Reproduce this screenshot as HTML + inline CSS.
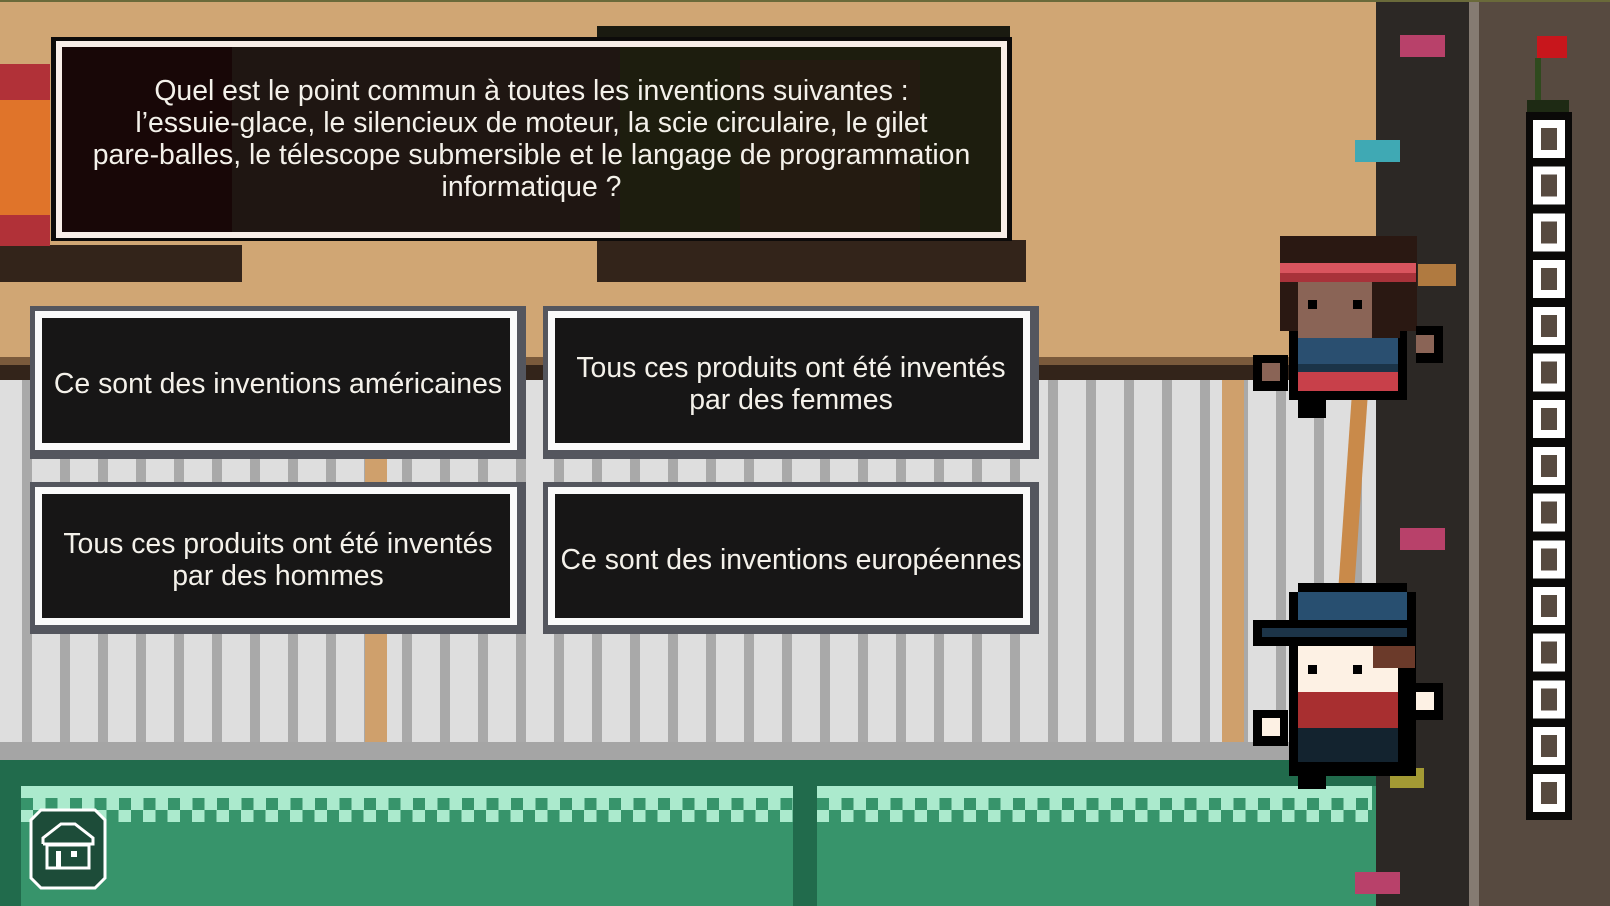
<!DOCTYPE html>
<html><head><meta charset="utf-8"><style>
*{margin:0;padding:0;box-sizing:border-box}
body{width:1610px;height:906px;overflow:hidden;position:relative;background:#d0a674;font-family:"Liberation Sans",sans-serif}
.a{position:absolute}
.t{color:#f4f1ea;font-size:28.4px;text-align:center;line-height:32px;position:absolute;display:flex;align-items:center;justify-content:center;white-space:nowrap}
.box{position:absolute;background:#54565e}
.box .w{position:absolute;left:5px;top:5px;right:9px;bottom:9px;background:#fafafa}
.box .d{position:absolute;left:12px;top:12px;right:16px;bottom:16px;background:#171616}
</style></head><body>
<div class="a" style="left:0;top:357px;width:1376px;height:8px;background:#7a5a3c"></div>
<div class="a" style="left:0;top:365px;width:1376px;height:15px;background:#33241a"></div>
<div class="a" style="left:0;top:380px;width:1376px;height:362px;background:#dedede;
background-image:repeating-linear-gradient(90deg,#dedede 0 22px,#a9a9a9 22px 32px,#dedede 32px 38px)"></div>
<div class="a" style="left:365px;top:380px;width:22px;height:380px;background:#cfa06c"></div>
<div class="a" style="left:1222px;top:380px;width:22px;height:380px;background:#cfa06c"></div>
<div class="a" style="left:0;top:742px;width:1376px;height:18px;background:#a5a5a5"></div>
<div class="a" style="left:0;top:760px;width:1376px;height:146px;background:#216b4c"></div>
<div class="a" style="left:21px;top:786px;width:772px;height:120px;background:#37946b"></div>
<div class="a" style="left:817px;top:786px;width:559px;height:120px;background:#37946b"></div>
<div class="a" style="left:21px;top:786px;width:772px;height:36px;background:#abeacd"></div>
<div class="a" style="left:817px;top:786px;width:555px;height:36px;background:#abeacd"></div>
<div class="a" style="left:21px;top:798px;width:772px;height:12px;background-image:repeating-linear-gradient(90deg,#37946b 0 12px,transparent 12px 24.5px)"></div>
<div class="a" style="left:33px;top:810px;width:760px;height:12px;background-image:repeating-linear-gradient(90deg,#37946b 0 12px,transparent 12px 24.5px)"></div>
<div class="a" style="left:817px;top:798px;width:555px;height:12px;background-image:repeating-linear-gradient(90deg,#37946b 0 12px,transparent 12px 24.5px)"></div>
<div class="a" style="left:829px;top:810px;width:543px;height:12px;background-image:repeating-linear-gradient(90deg,#37946b 0 12px,transparent 12px 24.5px)"></div>
<div class="a" style="left:1376px;top:0;width:93px;height:906px;background:#2c2825"></div>
<div class="a" style="left:1469px;top:0;width:10px;height:906px;background:#857b72"></div>
<div class="a" style="left:1479px;top:0;width:131px;height:906px;background:#574a40"></div>
<div class="a" style="left:0;top:0;width:1610px;height:2px;background:#6a6a3a"></div>
<div class="a" style="left:1400px;top:35px;width:45px;height:22px;background:#b8416a"></div>
<div class="a" style="left:1355px;top:140px;width:45px;height:22px;background:#3fa9b4"></div>
<div class="a" style="left:1418px;top:264px;width:38px;height:22px;background:#b07a40"></div>
<div class="a" style="left:1400px;top:528px;width:45px;height:22px;background:#b8416a"></div>
<div class="a" style="left:1355px;top:872px;width:45px;height:22px;background:#b8416a"></div>
<div class="a" style="left:1390px;top:768px;width:34px;height:20px;background:#a39a34"></div>
<div class="a" style="left:1526px;top:112px;width:46px;height:708px;background:#0a0908"></div>
<div class="a" style="left:1533px;top:120px;width:32px;height:696px;background-image:repeating-linear-gradient(180deg,#fff 0 38px,transparent 38px 46.7px)"></div>
<div class="a" style="left:1541px;top:128px;width:16px;height:680px;background-image:repeating-linear-gradient(180deg,#574a40 0 22px,transparent 22px 46.7px)"></div>
<div class="a" style="left:1537px;top:36px;width:30px;height:22px;background:#c8161c"></div>
<div class="a" style="left:1535px;top:58px;width:6px;height:50px;background:#2f4a1e"></div>
<div class="a" style="left:1527px;top:100px;width:42px;height:12px;background:#1e2a14"></div>
<div class="a" style="left:0;top:245px;width:242px;height:37px;background:#33241a"></div>
<div class="a" style="left:597px;top:240px;width:429px;height:42px;background:#33241a"></div>
<div class="a" style="left:0;top:64px;width:50px;height:182px;background:#b13138"></div>
<div class="a" style="left:0;top:100px;width:50px;height:115px;background:#e0742a"></div>
<div class="a" style="left:597px;top:26px;width:413px;height:20px;background:#1a1a10"></div>
<div class="a" style="left:51px;top:37px;width:961px;height:204px;background:#0d0b0a"></div>
<div class="a" style="left:56px;top:41px;width:951px;height:197px;background:#f8eee8"></div>
<div class="a" style="left:62px;top:47px;width:939px;height:185px;background:#1f1612"></div>
<div class="a" style="left:62px;top:47px;width:170px;height:185px;background:#180707"></div>
<div class="a" style="left:620px;top:47px;width:381px;height:185px;background:#1d1d0e"></div>
<div class="a" style="left:740px;top:60px;width:180px;height:170px;background:#2a1a14;opacity:.6"></div>
<div class="t" style="left:62px;top:59px;width:939px;height:160px">Quel est le point commun à toutes les inventions suivantes :<br>l’essuie-glace, le silencieux de moteur, la scie circulaire, le gilet<br>pare-balles, le télescope submersible et le langage de programmation<br>informatique ?</div>
<div class="box" style="left:30px;top:306px;width:496px;height:153px"><div class="w"></div><div class="d"></div></div>
<div class="t" style="left:30px;top:310px;width:496px;height:148px">Ce sont des inventions américaines</div>
<div class="box" style="left:543px;top:306px;width:496px;height:153px"><div class="w"></div><div class="d"></div></div>
<div class="t" style="left:543px;top:310px;width:496px;height:148px">Tous ces produits ont été inventés<br>par des femmes</div>
<div class="box" style="left:30px;top:482px;width:496px;height:152px"><div class="w"></div><div class="d"></div></div>
<div class="t" style="left:30px;top:486px;width:496px;height:148px">Tous ces produits ont été inventés<br>par des hommes</div>
<div class="box" style="left:543px;top:482px;width:496px;height:152px"><div class="w"></div><div class="d"></div></div>
<div class="t" style="left:543px;top:486px;width:496px;height:148px">Ce sont des inventions européennes</div>
<div class="a" style="left:1345px;top:395px;width:16px;height:195px;background:#c98a4a;transform:skewX(-4deg)"></div>
<div class="a" style="left:1289px;top:330px;width:118px;height:70px;background:#000"></div>
<div class="a" style="left:1280px;top:236px;width:137px;height:95px;background:#2a1812"></div>
<div class="a" style="left:1280px;top:263px;width:136px;height:10px;background:#d9545e"></div>
<div class="a" style="left:1280px;top:273px;width:136px;height:9px;background:#a8323a"></div>
<div class="a" style="left:1298px;top:282px;width:100px;height:56px;background:#8a6456"></div>
<div class="a" style="left:1372px;top:282px;width:28px;height:56px;background:#2a1812"></div>
<div class="a" style="left:1308px;top:300px;width:9px;height:9px;background:#000"></div>
<div class="a" style="left:1353px;top:300px;width:9px;height:9px;background:#000"></div>
<div class="a" style="left:1298px;top:338px;width:100px;height:30px;background:#2a4f70"></div>
<div class="a" style="left:1298px;top:364px;width:100px;height:8px;background:#1b3448"></div>
<div class="a" style="left:1298px;top:372px;width:100px;height:19px;background:#c8404a"></div>
<div class="a" style="left:1253px;top:355px;width:35px;height:36px;background:#000"></div>
<div class="a" style="left:1262px;top:363px;width:18px;height:18px;background:#8a6456"></div>
<div class="a" style="left:1416px;top:326px;width:27px;height:37px;background:#000"></div>
<div class="a" style="left:1416px;top:335px;width:18px;height:18px;background:#8a6456"></div>
<div class="a" style="left:1298px;top:391px;width:28px;height:27px;background:#000"></div>
<div class="a" style="left:1298px;top:583px;width:109px;height:12px;background:#000"></div>
<div class="a" style="left:1289px;top:592px;width:127px;height:54px;background:#000"></div>
<div class="a" style="left:1298px;top:592px;width:109px;height:36px;background:#284f70"></div>
<div class="a" style="left:1253px;top:620px;width:163px;height:26px;background:#000"></div>
<div class="a" style="left:1262px;top:628px;width:145px;height:9px;background:#1c3448"></div>
<div class="a" style="left:1289px;top:646px;width:127px;height:130px;background:#000"></div>
<div class="a" style="left:1298px;top:646px;width:100px;height:46px;background:#fdf1e4"></div>
<div class="a" style="left:1373px;top:646px;width:42px;height:22px;background:#6b3a2a"></div>
<div class="a" style="left:1308px;top:665px;width:9px;height:9px;background:#000"></div>
<div class="a" style="left:1353px;top:665px;width:9px;height:9px;background:#000"></div>
<div class="a" style="left:1298px;top:692px;width:100px;height:36px;background:#a82f30"></div>
<div class="a" style="left:1298px;top:728px;width:100px;height:34px;background:#13232f"></div>
<div class="a" style="left:1253px;top:710px;width:35px;height:36px;background:#000"></div>
<div class="a" style="left:1262px;top:718px;width:18px;height:18px;background:#fdf1e4"></div>
<div class="a" style="left:1416px;top:683px;width:27px;height:37px;background:#000"></div>
<div class="a" style="left:1416px;top:692px;width:18px;height:18px;background:#fdf1e4"></div>
<div class="a" style="left:1298px;top:762px;width:28px;height:27px;background:#000"></div>
<svg class="a" style="left:29px;top:808px" width="78" height="82" viewBox="0 0 78 82">
<polygon points="12,2 66,2 76,12 76,70 66,80 12,80 2,70 2,12" fill="#1d4c39" stroke="#fff" stroke-width="3"/>
<polyline points="14,36 14,30 32,16 46,16 64,30 64,36 14,36" fill="none" stroke="#fff" stroke-width="3"/>
<rect x="18" y="37" width="42" height="23" fill="none" stroke="#fff" stroke-width="3"/>
<rect x="27" y="43" width="5" height="17" fill="#fff"/>
<rect x="42" y="43" width="6" height="6" fill="#fff"/>
</svg>
</body></html>
